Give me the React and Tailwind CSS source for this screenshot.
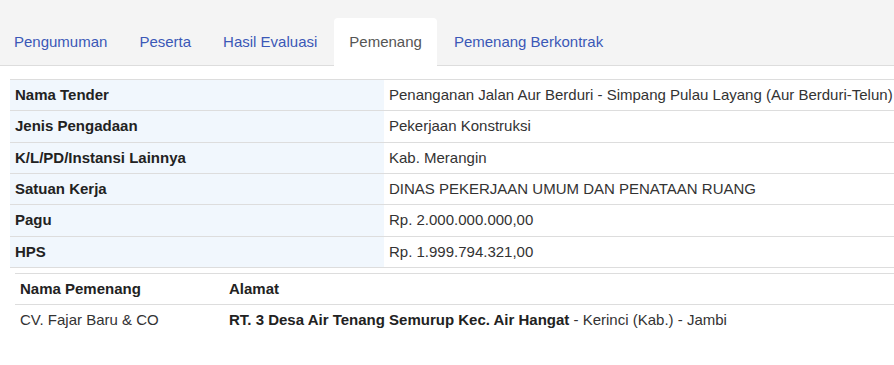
import React from 'react';

const tabs = ['Pengumuman', 'Peserta', 'Hasil Evaluasi', 'Pemenang', 'Pemenang Berkontrak'];

const rows = [
    ['Nama Tender', 'Penanganan Jalan Aur Berduri - Simpang Pulau Layang (Aur Berduri-Telun)'],
    ['Jenis Pengadaan', 'Pekerjaan Konstruksi'],
    ['K/L/PD/Instansi Lainnya', 'Kab. Merangin'],
    ['Satuan Kerja', 'DINAS PEKERJAAN UMUM DAN PENATAAN RUANG'],
    ['Pagu', 'Rp. 2.000.000.000,00'],
    ['HPS', 'Rp. 1.999.794.321,00'],
];

export default function App() {
    const active = 'Pemenang';

    return (
        <div className="w-full overflow-hidden bg-white font-['Liberation_Sans',Arial,sans-serif] text-[15px] text-[#333]">
            {/* Tabs */}
            <div className="bg-[#f4f4f4] border-b border-[#dddddd] pt-[18px]">
                <ul className="flex whitespace-nowrap -mb-px -ml-px">
                    {tabs.map((t) => (
                        <li key={t} className="mr-[2px]">
                            <div
                                className={
                                    t === active
                                        ? 'h-[48px] px-[15px] flex items-center text-[15px] text-[#555] bg-white rounded-t-[4px]'
                                        : 'h-[48px] px-[15px] flex items-center text-[15px] text-[#3b58b7]'
                                }
                            >
                                {t}
                            </div>
                        </li>
                    ))}
                </ul>
            </div>

            {/* Detail tender */}
            <div className="pt-[13px] pl-[10px]">
                <table className="w-[1000px] border-collapse">
                    <tbody>
                        {rows.map(([label, value]) => (
                            <tr key={label} className="border-t border-b border-[#dddddd]">
                                <th className="w-[374px] bg-[#f1f7fd] text-left font-bold text-[#222] px-[5px] py-[5px] leading-[20.33px] whitespace-nowrap">
                                    {label}
                                </th>
                                <td className="px-[5px] py-[5px] leading-[20.33px] whitespace-nowrap">
                                    {value}
                                </td>
                            </tr>
                        ))}
                    </tbody>
                </table>
            </div>

            {/* Pemenang */}
            <div className="pt-[5px] pl-[15px] pb-[30px]">
                <table className="w-[1000px] border-collapse">
                    <thead>
                        <tr className="border-t border-b border-[#dddddd]">
                            <th className="w-[209px] text-left font-bold text-[#222] px-[5px] py-[5px] leading-[20.33px]">
                                Nama Pemenang
                            </th>
                            <th className="text-left font-bold text-[#222] px-[5px] py-[5px] leading-[20.33px]">
                                Alamat
                            </th>
                        </tr>
                    </thead>
                    <tbody>
                        <tr>
                            <td className="px-[5px] py-[5px] leading-[20.33px] whitespace-nowrap">CV. Fajar Baru &amp; CO</td>
                            <td className="px-[5px] py-[5px] leading-[20.33px] whitespace-nowrap">
                                <b className="text-[#222]">RT. 3 Desa Air Tenang Semurup Kec. Air Hangat</b> - Kerinci (Kab.) - Jambi
                            </td>
                        </tr>
                    </tbody>
                </table>
            </div>
        </div>
    );
}
